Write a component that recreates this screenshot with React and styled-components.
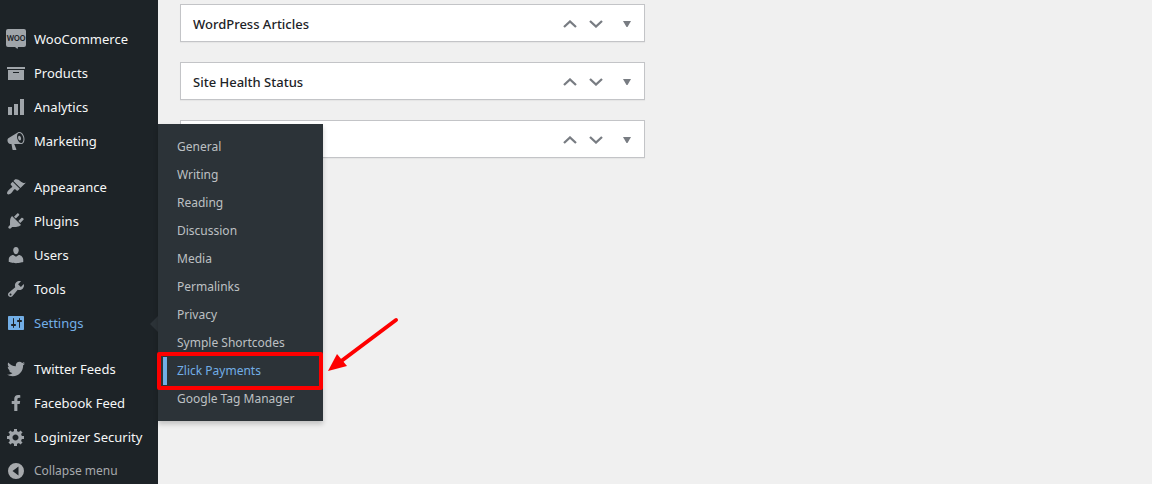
import React from "react";
import styled, { createGlobalStyle, css } from "styled-components";
import { FaFacebookF } from "react-icons/fa";

const GlobalStyle = createGlobalStyle`
  * { box-sizing: border-box; }
  body {
    margin: 0;
    background: #f0f0f0;
    color: #1d2327;
    font-family: "Segoe UI", "Noto Sans", "Open Sans", sans-serif;
    font-size: 13px;
    overflow: hidden;
  }
  ul { list-style: none; margin: 0; padding: 0; }
`;

const Page = styled.div`
  display: grid;
  grid-template-columns: 158px 1fr;
  height: 100vh;
`;

const Sidebar = styled.nav`
  position: relative;
  z-index: 1;
  background: #1d2327;
  padding-top: 22px;
`;

const MenuGroup = styled.ul`
  & + & { margin-top: 12px; }
`;

const MenuItem = styled.li`
  position: relative;
`;

const menuRow = css`
  display: flex;
  align-items: center;
  gap: 8px;
  width: 100%;
  height: 34px;
  padding: 0 0 0 6px;
  border: 0;
  background: none;
  font-family: inherit;
  line-height: 18px;
  text-align: left;
  white-space: nowrap;
  text-decoration: none;
  svg { flex: none; fill: currentColor; }
`;

const MenuLink = styled.a`
  ${menuRow}
  color: ${(p) => (p.$current ? "#72aee6" : "#f6f7f7")};
  font-size: 13px;
  svg { color: ${(p) => (p.$current ? "#72aee6" : "#a0a5aa")}; }
`;

const CollapseButton = styled.button`
  ${menuRow}
  color: #a7aaad;
  font-size: 12px;
`;

const Pointer = styled.span`
  position: absolute;
  right: 0;
  top: 10px;
  border: 8px solid transparent;
  border-left-width: 0;
  border-right-color: #2c3338;
`;

const Submenu = styled.ul`
  position: absolute;
  left: 100%;
  bottom: -81px;
  width: 165px;
  && { padding: 9px 0 8px; }
  background: #2c3338;
  box-shadow: 0 3px 5px rgba(0, 0, 0, 0.2);
`;

const SubmenuItem = styled.li`
  position: relative;
`;

const SubmenuLink = styled.a`
  display: block;
  padding: 0 0 0 19px;
  color: ${(p) => (p.$current ? "#72aee6" : "#bdc0c3")};
  font-size: 12px;
  line-height: 28px;
  white-space: nowrap;
  text-decoration: none;
`;

const CurrentBar = styled.span`
  position: absolute;
  left: 5px;
  top: 0;
  width: 4px;
  height: 28px;
  background: #72aee6;
`;

const Highlight = styled.span`
  position: absolute;
  inset: -5px 0 -5px -1px;
  border: 4px solid #fe0000;
  border-radius: 2px;
  pointer-events: none;
`;

const ArrowDrawing = styled.svg`
  position: absolute;
  left: 100%;
  top: -41px;
  margin-left: 4px;
  pointer-events: none;
`;

const Content = styled.main`
  display: grid;
  grid-template-columns: 1fr 1fr;
  gap: 20px;
  align-items: start;
  padding: 4px 22px;
`;

const BoxColumn = styled.div`
  display: flex;
  flex-direction: column;
  gap: 20px;
`;

const Postbox = styled.section`
  display: flex;
  align-items: center;
  height: 38px;
  padding-top: 2px;
  border: 1px solid #c3c4c7;
  background: #fff;
  box-shadow: 0 1px 1px rgba(0, 0, 0, 0.04);
`;

const BoxTitle = styled.h2`
  margin: 0;
  padding-left: 12px;
  font-size: 13px;
  font-weight: 500;
  line-height: 20px;
`;

const BoxActions = styled.div`
  display: flex;
  margin-left: auto;
`;

const ActionButton = styled.button`
  display: flex;
  align-items: center;
  justify-content: center;
  width: ${(p) => (p.$wide ? "35px" : "26px")};
  height: 34px;
  padding: 0;
  border: 0;
  background: none;
  color: #787c82;
`;

const paths = {
  archive: "M19 4v2H1V4h18zM2 7h16v10H2V7zm11 3V9H7v1h6z",
  chart: "M18 18V2h-4v16h4zm-6 0V7H8v11h4zm-6 0v-8H2v8h4z",
  megaphone:
    "M18.15 5.94c.46 1.62.38 3.22-.02 4.48-.42 1.28-1.26 2.18-2.3 2.48-.16.06-.26.06-.4.06-.06.02-.12.02-.18.02-.06.02-.14.02-.22.02h-6.8l2.22 5.5c.02.14-.06.26-.14.34-.08.1-.24.16-.34.16H6.95c-.1 0-.26-.06-.34-.16-.08-.08-.16-.2-.14-.34l-1-5.5H4.25l-.02-.02c-.5.06-1.08-.18-1.54-.62s-.88-1.08-1.06-1.88c-.24-.8-.2-1.56-.02-2.2.18-.62.58-1.08 1.06-1.3l.02-.02 9-5.4c.1-.06.18-.1.24-.16.06-.04.14-.08.24-.12.16-.08.28-.12.5-.18 1.04-.3 2.24.1 3.22.98s1.84 2.24 2.26 3.86zm-2.58 5.98h-.02c.4-.1.74-.34 1.04-.7.58-.7.86-1.76.86-3.04 0-.64-.1-1.3-.28-1.98-.34-1.36-1.02-2.5-1.78-3.24s-1.68-1.1-2.46-.88c-.82.22-1.4.96-1.7 2-.32 1.04-.28 2.36.06 3.72.38 1.36 1 2.5 1.8 3.24.78.74 1.62 1.1 2.48.88zm-2.54-7.08c.22-.04.42-.02.62.04.38.16.76.48 1.02 1s.42 1.2.42 1.78c0 .3-.04.56-.12.8-.18.48-.44.84-.86.94-.34.1-.8-.06-1.14-.4s-.64-.86-.78-1.5c-.18-.62-.12-1.24.02-1.72s.48-.84.82-.94z",
  brush:
    "M14.48 11.06L7.41 3.99l1.5-1.5c.5-.56 2.3-.47 3.51.32 1.21.8 1.43 1.28 2.91 2.1 1.18.64 2.45 1.26 4.45.85zm-.71.71L6.7 4.7 4.93 6.47c-.39.39-.39 1.02 0 1.41l1.06 1.06c.39.39.39 1.03 0 1.42-.6.6-1.43 1.11-2.21 1.69-.35.26-.7.53-1.01.84C1.43 14.23.4 16.08 1.4 17.07c.99 1 2.84-.03 4.18-1.36.31-.31.58-.66.85-1.02.57-.78 1.08-1.61 1.69-2.21.39-.39 1.02-.39 1.41 0l1.06 1.06c.39.39 1.02.39 1.41 0z",
  plug:
    "M13.11 4.36L9.87 7.6 8 5.73l3.24-3.24c.35-.34 1.05-.2 1.56.32.52.51.66 1.21.31 1.55zm-8 1.77l.91-1.12 9.01 9.01-1.19.84c-.71.71-2.63 1.16-3.82 1.16H6.14L4.9 17.26c-.59.59-1.54.59-2.12 0-.59-.58-.59-1.53 0-2.12l1.24-1.24v-3.88c0-1.13.4-3.19 1.09-3.89zm7.26 3.97l3.24-3.24c.34-.35 1.04-.21 1.55.31.52.51.66 1.21.31 1.55l-3.24 3.25z",
  user:
    "M10 9.25c-2.27 0-2.73-3.44-2.73-3.44C7 4.02 7.82 2 9.97 2c2.16 0 2.98 2.02 2.71 3.81 0 0-.41 3.44-2.68 3.44zm0 2.57L12.72 10c2.39 0 4.52 2.33 4.52 4.53v2.49s-3.65 1.13-7.24 1.13c-3.65 0-7.24-1.13-7.24-1.13v-2.49c0-2.25 1.94-4.48 4.47-4.48z",
  wrench:
    "M16.68 9.77c-1.34 1.34-3.3 1.67-4.95.99l-5.41 6.52c-.99.99-2.59.99-3.58 0s-.99-2.59 0-3.57l6.52-5.42c-.68-1.65-.35-3.61.99-4.95 1.28-1.28 3.12-1.62 4.72-1.06l-2.89 2.89 2.82 2.82 2.86-2.87c.53 1.58.18 3.39-1.08 4.65zM3.81 16.21c.4.39 1.04.39 1.43 0 .4-.4.4-1.04 0-1.43-.39-.4-1.03-.4-1.43 0-.39.39-.39 1.03 0 1.43z",
  sliders:
    "M18 16V4c0-.55-.45-1-1-1H3c-.55 0-1 .45-1 1v12c0 .55.45 1 1 1h14c.55 0 1-.45 1-1zM8 11h1c.55 0 1 .45 1 1s-.45 1-1 1H8v1.5c0 .28-.22.5-.5.5s-.5-.22-.5-.5V13H6c-.55 0-1-.45-1-1s.45-1 1-1h1V5.5c0-.28.22-.5.5-.5s.5.22.5.5V11zm5-2h-1c-.55 0-1-.45-1-1s.45-1 1-1h1V5.5c0-.28.22-.5.5-.5s.5.22.5.5V7h1c.55 0 1 .45 1 1s-.45 1-1 1h-1v5.5c0 .28-.22.5-.5.5s-.5-.22-.5-.5V9z",
  twitter:
    "M18.94 4.46c-.49.73-1.11 1.38-1.83 1.9.01.15.01.31.01.47 0 4.85-3.69 10.44-10.43 10.44-2.07 0-4-.61-5.63-1.65.29.03.58.05.88.05 1.72 0 3.3-.59 4.55-1.57-1.6-.03-2.95-1.09-3.42-2.55.22.04.45.07.69.07.33 0 .66-.05.96-.13-1.67-.34-2.94-1.82-2.94-3.6v-.04c.5.27 1.06.44 1.66.46-.98-.66-1.63-1.78-1.63-3.06 0-.67.18-1.3.5-1.84 1.81 2.22 4.51 3.68 7.56 3.83-.06-.27-.1-.55-.1-.84 0-2.02 1.65-3.66 3.67-3.66 1.06 0 2.01.44 2.68 1.16.83-.17 1.62-.47 2.33-.89-.28.85-.86 1.57-1.62 2.02.75-.08 1.45-.28 2.11-.57z",
  gear:
    "M18 12h-2.18c-.17.7-.44 1.35-.81 1.93l1.54 1.54-2.1 2.1-1.54-1.54c-.58.36-1.23.63-1.91.79V19H8v-2.18c-.68-.16-1.33-.43-1.91-.79l-1.54 1.54-2.12-2.12 1.54-1.54c-.36-.58-.63-1.23-.79-1.91H1V9.03h2.17c.16-.7.44-1.35.8-1.94L2.43 5.55l2.1-2.1 1.54 1.54c.58-.37 1.24-.64 1.93-.81V2h3v2.18c.68.16 1.33.43 1.91.79l1.54-1.54 2.12 2.12-1.54 1.54c.36.59.64 1.24.8 1.94H18V12zm-8.5 1.5c1.66 0 3-1.34 3-3s-1.34-3-3-3-3 1.34-3 3 1.34 3 3 3z",
  collapse:
    "M10 2a8 8 0 1 0 0 16 8 8 0 0 0 0-16zM12.5 5.5v9L6.5 10z",
};

const Glyph = ({ name }) => (
  <svg width="20" height="20" viewBox="0 0 20 20" aria-hidden="true">
    <path fillRule="evenodd" d={paths[name]} />
  </svg>
);

const WooLogo = () => (
  <svg width="20" height="20" viewBox="0 0 20 20" aria-hidden="true">
    <path d="M2 0h16a2 2 0 0 1 2 2v14a2 2 0 0 1-2 2h-6l-.5 2L9 18H2a2 2 0 0 1-2-2V2a2 2 0 0 1 2-2z" />
    <text x="10" y="12" textAnchor="middle" fill="#1d2327" fontFamily="Lato, sans-serif" fontSize="7" fontWeight="900">
      WOO
    </text>
  </svg>
);

const FacebookLogo = () => (
  <svg width="20" height="20" viewBox="0 0 20 20" aria-hidden="true">
    <FaFacebookF x="2" y="2" size={16} />
  </svg>
);

const Chevron = ({ down }) => (
  <svg width="14" height="8" viewBox="0 0 14 8" fill="none" stroke="currentColor" strokeWidth="2.300" aria-hidden="true">
    <path d={down ? "M1 1l6 5.500L13 1" : "M1 7l6-5.500L13 7"} />
  </svg>
);

const Triangle = () => (
  <svg width="8" height="6" viewBox="0 0 8 6" fill="currentColor" aria-hidden="true">
    <path d="M0 0h8L4.500 6h-1z" />
  </svg>
);

const menu = [
  [
    { label: "WooCommerce", icon: <WooLogo /> },
    { label: "Products", icon: <Glyph name="archive" /> },
    { label: "Analytics", icon: <Glyph name="chart" /> },
    { label: "Marketing", icon: <Glyph name="megaphone" /> },
  ],
  [
    { label: "Appearance", icon: <Glyph name="brush" /> },
    { label: "Plugins", icon: <Glyph name="plug" /> },
    { label: "Users", icon: <Glyph name="user" /> },
    { label: "Tools", icon: <Glyph name="wrench" /> },
    { label: "Settings", icon: <Glyph name="sliders" />, current: true },
  ],
  [
    { label: "Twitter Feeds", icon: <Glyph name="twitter" /> },
    { label: "Facebook Feed", icon: <FacebookLogo /> },
    { label: "Loginizer Security", icon: <Glyph name="gear" /> },
  ],
];

const settingsPages = [
  "General",
  "Writing",
  "Reading",
  "Discussion",
  "Media",
  "Permalinks",
  "Privacy",
  "Symple Shortcodes",
  "Zlick Payments",
  "Google Tag Manager",
];

const SettingsSubmenu = () => (
  <>
    <Pointer />
    <Submenu>
      {settingsPages.map((page) => {
        const current = page === "Zlick Payments";
        return (
          <SubmenuItem key={page}>
            {current && <CurrentBar />}
            <SubmenuLink href="#" $current={current}>{page}</SubmenuLink>
            {current && (
              <>
                <Highlight />
                <ArrowDrawing width="74" height="60" viewBox="0 0 74 60" aria-hidden="true">
                  <path d="M69 4L13 46" stroke="#fe0000" strokeWidth="4" strokeLinecap="round" />
                  <path d="M1 55l9-17 10 12z" fill="#fe0000" />
                </ArrowDrawing>
              </>
            )}
          </SubmenuItem>
        );
      })}
    </Submenu>
  </>
);

const DashboardBox = ({ title }) => (
  <Postbox>
    {title && <BoxTitle>{title}</BoxTitle>}
    <BoxActions>
      <ActionButton type="button" aria-label="Move up"><Chevron /></ActionButton>
      <ActionButton type="button" aria-label="Move down"><Chevron down /></ActionButton>
      <ActionButton type="button" aria-label="Toggle panel" $wide><Triangle /></ActionButton>
    </BoxActions>
  </Postbox>
);

export default function App() {
  return (
    <>
      <GlobalStyle />
      <Page>
        <Sidebar>
          {menu.map((group) => (
            <MenuGroup key={group[0].label}>
              {group.map(({ label, icon, current }) => (
                <MenuItem key={label}>
                  <MenuLink href="#" $current={current}>
                    {icon}
                    {label}
                  </MenuLink>
                  {current && <SettingsSubmenu />}
                </MenuItem>
              ))}
            </MenuGroup>
          ))}
          <CollapseButton type="button">
            <Glyph name="collapse" />
            Collapse menu
          </CollapseButton>
        </Sidebar>
        <Content>
          <BoxColumn>
            <DashboardBox title="WordPress Articles" />
            <DashboardBox title="Site Health Status" />
            <DashboardBox />
          </BoxColumn>
        </Content>
      </Page>
    </>
  );
}
